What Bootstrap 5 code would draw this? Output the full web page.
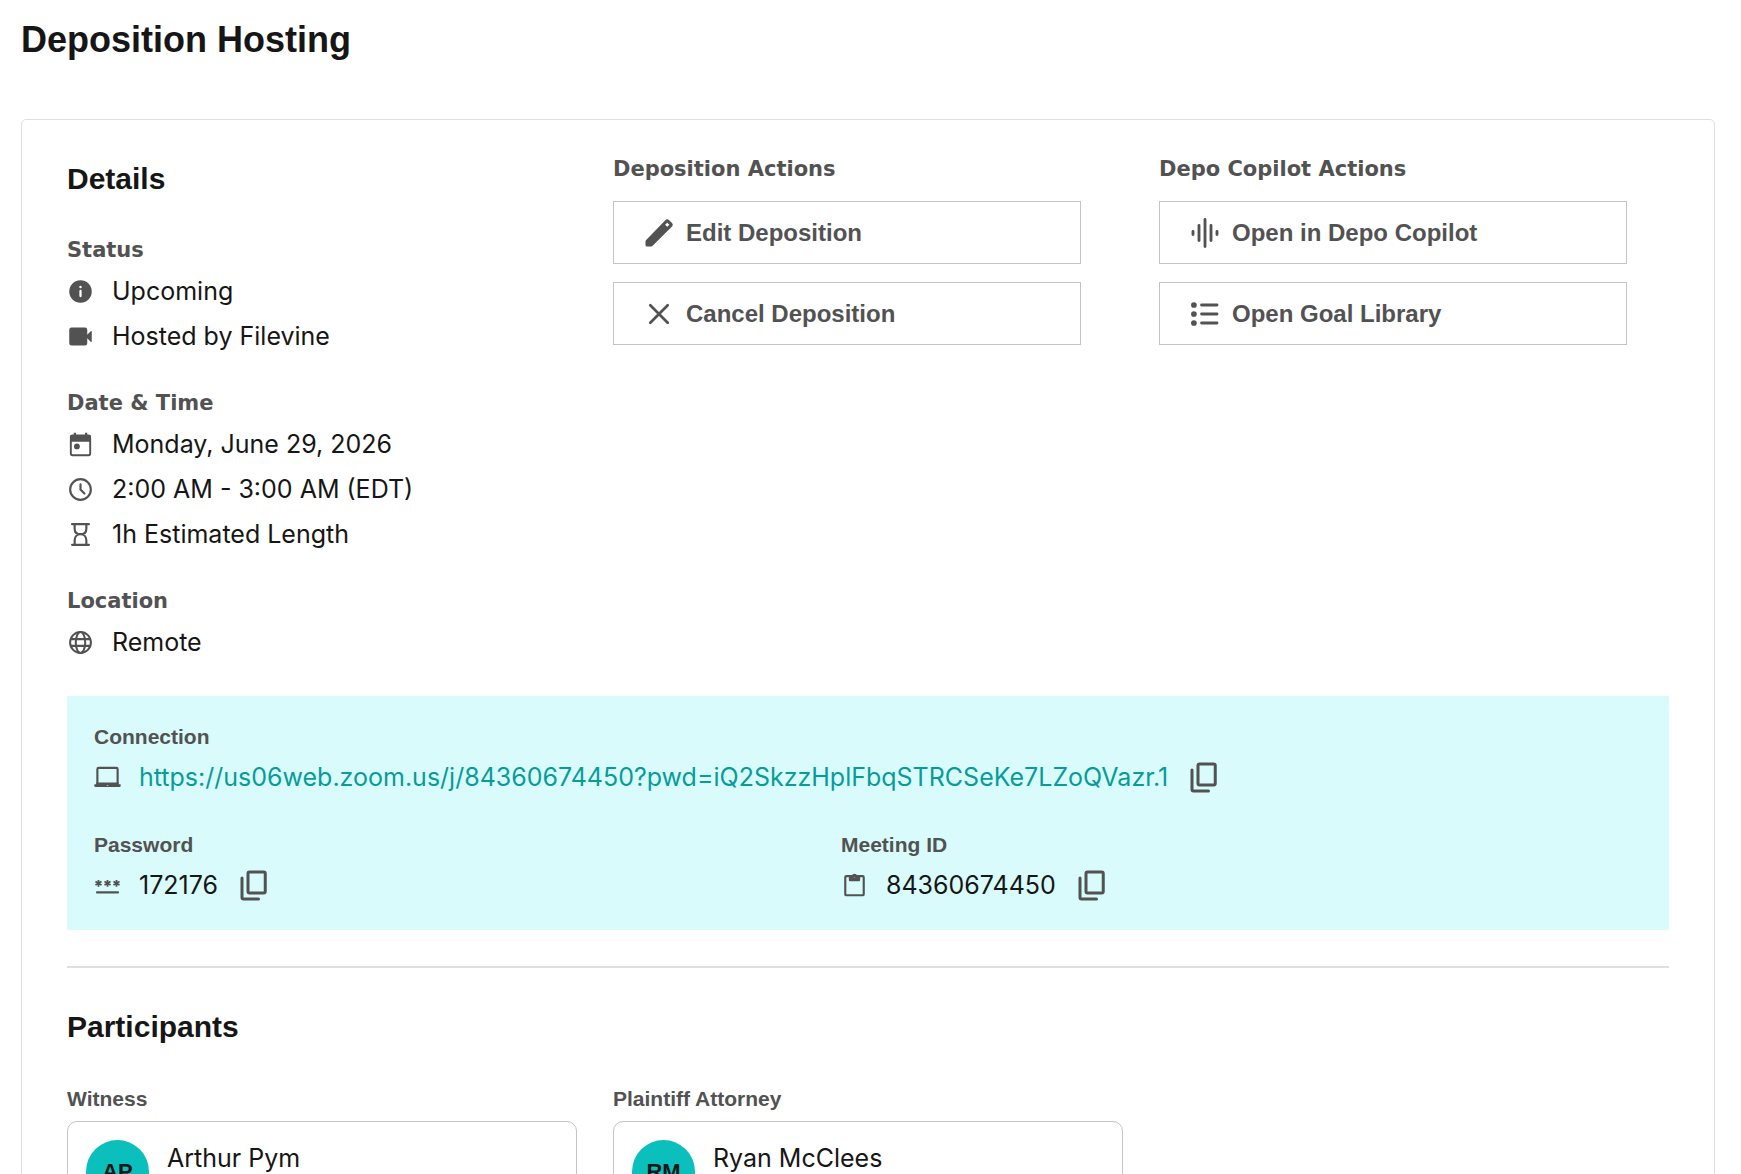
<!DOCTYPE html>
<html lang="en">
<head>
<meta charset="utf-8">
<meta name="viewport" content="width=device-width, initial-scale=1">
<title>Deposition Hosting</title>
<link href="https://cdn.jsdelivr.net/npm/bootstrap@5.3.0/dist/css/bootstrap.min.css" rel="stylesheet">
<style>
  body { font-family: "Liberation Sans", Arial, sans-serif; color: #161616; }
  .page-title { font-size: 36px; line-height: 44px; font-weight: 700; }
  .page-shell { padding: 18px 26px 0 21px; }
  .panel-main { margin-top: 57px; border: 1px solid #e0e0e0; border-radius: 5px; padding: 31px 45px 45px; }
  .section-title { font-size: 30px; line-height: 40px; font-weight: 700; margin-bottom: 33px; }
  .grid-three { --bs-gutter-x: 36px; }
  .details-col { padding-top: 8px; }
  .actions-col { padding-right: 60px; }
  .group-label { font-size: 21px; line-height: 37px; font-weight: 700; color: #525252; margin: 0; }
  .wide-label { font-family: "DejaVu Sans", Verdana, sans-serif; }
  .info-group + .info-group { margin-top: 26px; }
  .info-line { display: flex; align-items: center; gap: 18px; min-height: 45px; font-family: Inter, sans-serif; font-size: 25px; line-height: 45px; }
  .ico { width: 27px; height: 27px; flex: none; color: #525252; }
  .ico-lg { width: 36px; height: 36px; flex: none; color: #525252; }
  .action-btn { min-height: 63px; border: 1px solid #c4c4c4; border-radius: 0; padding: 0 27px; gap: 9px; font-size: 24px; font-weight: 700; color: #525252; }
  .action-stack { margin-top: 13px; gap: 18px; }
  .connect-box { margin-top: 31px; background: #d9fbfc; padding: 22px 81px 22px 27px; }
  .meet-link { color: #089c98; text-decoration: none; overflow-wrap: anywhere; }
  .rule { height: 2px; border: 0; background: #dedede; opacity: 1; margin: 36px 0 39px; }
  .person-card { margin-top: 4px; border: 1px solid #c4c4c4; border-radius: 10px; padding: 18px; gap: 18px; }
  .avatar { width: 63px; height: 63px; background: #0bbfbd; font-size: 22px; font-weight: 700; flex: none; }
  .person-name { font-family: Inter, sans-serif; font-size: 25px; line-height: 37px; }
</style>
</head>
<body class="bg-white vh-100 overflow-hidden">
<svg class="d-none" aria-hidden="true">
  <symbol id="copy" viewBox="0 0 24 24"><g fill="none" stroke="currentColor" stroke-width="2" stroke-linecap="round" stroke-linejoin="round"><rect x="8" y="2.600" width="11.500" height="14" rx="1"/><path d="M4 6.600v13a1 1 0 0 0 1 1h10"/></g></symbol>
</svg>
<main class="page-shell">
  <h1 class="page-title m-0">Deposition Hosting</h1>

  <div class="panel-main">
    <div class="row grid-three">
      <section class="col-4 details-col">
        <h2 class="section-title">Details</h2>
        <div class="info-group">
          <h3 class="group-label wide-label">Status</h3>
          <div class="info-line">
            <svg class="ico" viewBox="0 0 24 24"><circle cx="12" cy="12" r="10" fill="currentColor"/><path d="M12 11.5v4.5" stroke="#fff" stroke-width="2" stroke-linecap="round"/><circle cx="12" cy="8" r="1.1" fill="#fff"/></svg>
            <span>Upcoming</span>
          </div>
          <div class="info-line">
            <svg class="ico" viewBox="0 0 24 24"><path fill="currentColor" d="M4 4h12a2 2 0 0 1 2 2v4.500l3.300-3.300c.3-.3.700-.1.700.3v9c0 .4-.4.6-.7.3L18 13.500V18a2 2 0 0 1-2 2H4a2 2 0 0 1-2-2V6a2 2 0 0 1 2-2z"/></svg>
            <span>Hosted by Filevine</span>
          </div>
        </div>
        <div class="info-group">
          <h3 class="group-label wide-label">Date &amp; Time</h3>
          <div class="info-line">
            <svg class="ico" viewBox="0 0 24 24"><rect x="3.400" y="3.900" width="17.200" height="17.600" rx="1.500" fill="none" stroke="currentColor" stroke-width="1.700"/><path d="M3 4h18v5.500H3zM6 1.500h2v3H6zM16 1.500h2v3h-2z" fill="currentColor"/><circle cx="8.800" cy="13.700" r="2.600" fill="currentColor"/></svg>
            <span>Monday, June 29, 2026</span>
          </div>
          <div class="info-line">
            <svg class="ico" viewBox="0 0 24 24" fill="none" stroke="currentColor" stroke-width="1.900" stroke-linecap="round"><circle cx="12" cy="12" r="9.200"/><path d="M12 7.300V12l3.500 3.500"/></svg>
            <span>2:00 AM - 3:00 AM (EDT)</span>
          </div>
          <div class="info-line">
            <svg class="ico" viewBox="0 0 24 24" fill="none" stroke="currentColor" stroke-width="1.900" stroke-linecap="round"><path d="M4.500 2.800h15M4.500 21.200h15M6.800 2.800v4c0 3.500 2.500 4.900 5.200 4.900s5.200-1.400 5.200-4.900v-4M6.800 21.200v-4c0-3.500 2.500-5.500 5.200-5.500s5.200 2 5.200 5.500v4"/></svg>
            <span>1h Estimated Length</span>
          </div>
        </div>
        <div class="info-group">
          <h3 class="group-label wide-label">Location</h3>
          <div class="info-line">
            <svg class="ico" viewBox="0 0 24 24" fill="none" stroke="currentColor" stroke-width="1.800"><circle cx="12" cy="12" r="9.250"/><ellipse cx="12" cy="12" rx="4.200" ry="9.250"/><path d="M3.300 9h17.400M3.300 15h17.400"/></svg>
            <span>Remote</span>
          </div>
        </div>
      </section>

      <section class="col-4 actions-col">
        <h3 class="group-label wide-label">Deposition Actions</h3>
        <div class="action-stack d-flex flex-column">
          <button type="button" class="btn action-btn d-flex align-items-center">
            <svg class="ico-lg" viewBox="0 0 24 24"><path fill="currentColor" fill-rule="evenodd" d="M3 17.800V20a1 1 0 0 0 1 1h2.700a1.500 1.500 0 0 0 1.060-.44L20.500 7.800a1.800 1.800 0 0 0 0-2.600L18.800 3.500a1.800 1.800 0 0 0-2.600 0L3.440 16.740A1.500 1.500 0 0 0 3 17.800zM17.500 5.100l1.400 1.400-1.400 1.400-1.400-1.400z"/></svg>
            Edit Deposition
          </button>
          <button type="button" class="btn action-btn d-flex align-items-center">
            <svg class="ico-lg" viewBox="0 0 24 24"><path d="M6.200 6.200l11.600 11.600M17.800 6.200L6.200 17.800" stroke="currentColor" stroke-width="1.800" stroke-linecap="round"/></svg>
            Cancel Deposition
          </button>
        </div>
      </section>

      <section class="col-4 actions-col">
        <h3 class="group-label wide-label">Depo Copilot Actions</h3>
        <div class="action-stack d-flex flex-column">
          <button type="button" class="btn action-btn d-flex align-items-center">
            <svg class="ico-lg" viewBox="0 0 24 24"><path d="M4 11v2M8 7v10M12 3v18M16 7v10M20 11v2" stroke="currentColor" stroke-width="1.900" stroke-linecap="round"/></svg>
            Open in Depo Copilot
          </button>
          <button type="button" class="btn action-btn d-flex align-items-center">
            <svg class="ico-lg" viewBox="0 0 24 24"><g fill="currentColor"><circle cx="4.600" cy="6" r="1.900"/><circle cx="4.600" cy="12" r="1.900"/><circle cx="4.600" cy="18" r="1.900"/></g><path d="M9.700 6h10.300M9.700 12h10.300M9.700 18h10.300" stroke="currentColor" stroke-width="1.900" stroke-linecap="round"/></svg>
            Open Goal Library
          </button>
        </div>
      </section>
    </div>

    <section class="connect-box">
      <div class="info-group">
        <h3 class="group-label">Connection</h3>
        <div class="info-line">
          <svg class="ico" viewBox="0 0 24 24"><rect x="3" y="3.500" width="18" height="14.500" rx="1.200" fill="none" stroke="currentColor" stroke-width="1.900"/><path fill="currentColor" fill-rule="evenodd" d="M2 16.500h20V18h1.200c1 0 .8 2.500-.6 2.500H1.400c-1.400 0-1.600-2.500-.6-2.500H2zm10 1a1 1 0 1 0 0 2 1 1 0 0 0 0-2z"/></svg>
          <a class="meet-link" href="https://us06web.zoom.us/j/84360674450?pwd=iQ2SkzzHplFbqSTRCSeKe7LZoQVazr.1">https://us06web.zoom.us/j/84360674450?pwd=iQ2SkzzHplFbqSTRCSeKe7LZoQVazr.1</a>
          <button type="button" class="btn p-0 border-0 d-flex" aria-label="Copy link"><svg class="ico-lg"><use href="#copy"/></svg></button>
        </div>
      </div>
      <div class="info-group row gx-0">
        <div class="col-6">
          <h3 class="group-label">Password</h3>
          <div class="info-line">
            <svg class="ico" viewBox="0 0 24 24"><path d="M2.700 18.200h18.600" stroke="currentColor" stroke-width="2" stroke-linecap="round"/><g stroke="currentColor" stroke-width="1.600"><path d="M4 7v6M1.300 8.500l5.400 3M6.700 8.500l-5.400 3"/><path d="M12 7v6M9.300 8.500l5.400 3M14.700 8.500l-5.400 3"/><path d="M20 7v6M17.300 8.500l5.400 3M22.700 8.500l-5.400 3"/></g></svg>
            <span>172176</span>
            <button type="button" class="btn p-0 border-0 d-flex" aria-label="Copy password"><svg class="ico-lg"><use href="#copy"/></svg></button>
          </div>
        </div>
        <div class="col-6">
          <h3 class="group-label">Meeting ID</h3>
          <div class="info-line">
            <svg class="ico" viewBox="0 0 24 24"><rect x="3.800" y="3.700" width="16.400" height="17" rx="1" fill="none" stroke="currentColor" stroke-width="1.900"/><path fill="currentColor" fill-rule="evenodd" d="M7 3.300h2.600a2.500 2.500 0 0 1 4.800 0H17v4a1 1 0 0 1-1 1H8a1 1 0 0 1-1-1zm5-.4a1 1 0 1 0 0 2 1 1 0 0 0 0-2z"/></svg>
            <span>84360674450</span>
            <button type="button" class="btn p-0 border-0 d-flex" aria-label="Copy meeting ID"><svg class="ico-lg"><use href="#copy"/></svg></button>
          </div>
        </div>
      </div>
    </section>

    <hr class="rule">

    <section>
      <h2 class="section-title">Participants</h2>
      <div class="row grid-three">
        <div class="col-4">
          <h3 class="group-label">Witness</h3>
          <div class="person-card d-flex">
            <div class="avatar rounded-circle d-flex align-items-center justify-content-center">AP</div>
            <div class="person-name">Arthur Pym</div>
          </div>
        </div>
        <div class="col-4">
          <h3 class="group-label">Plaintiff Attorney</h3>
          <div class="person-card d-flex">
            <div class="avatar rounded-circle d-flex align-items-center justify-content-center">RM</div>
            <div class="person-name">Ryan McClees</div>
          </div>
        </div>
      </div>
    </section>
  </div>
</main>
<script src="https://cdn.jsdelivr.net/npm/bootstrap@5.3.0/dist/js/bootstrap.bundle.min.js"></script>
</body>
</html>
